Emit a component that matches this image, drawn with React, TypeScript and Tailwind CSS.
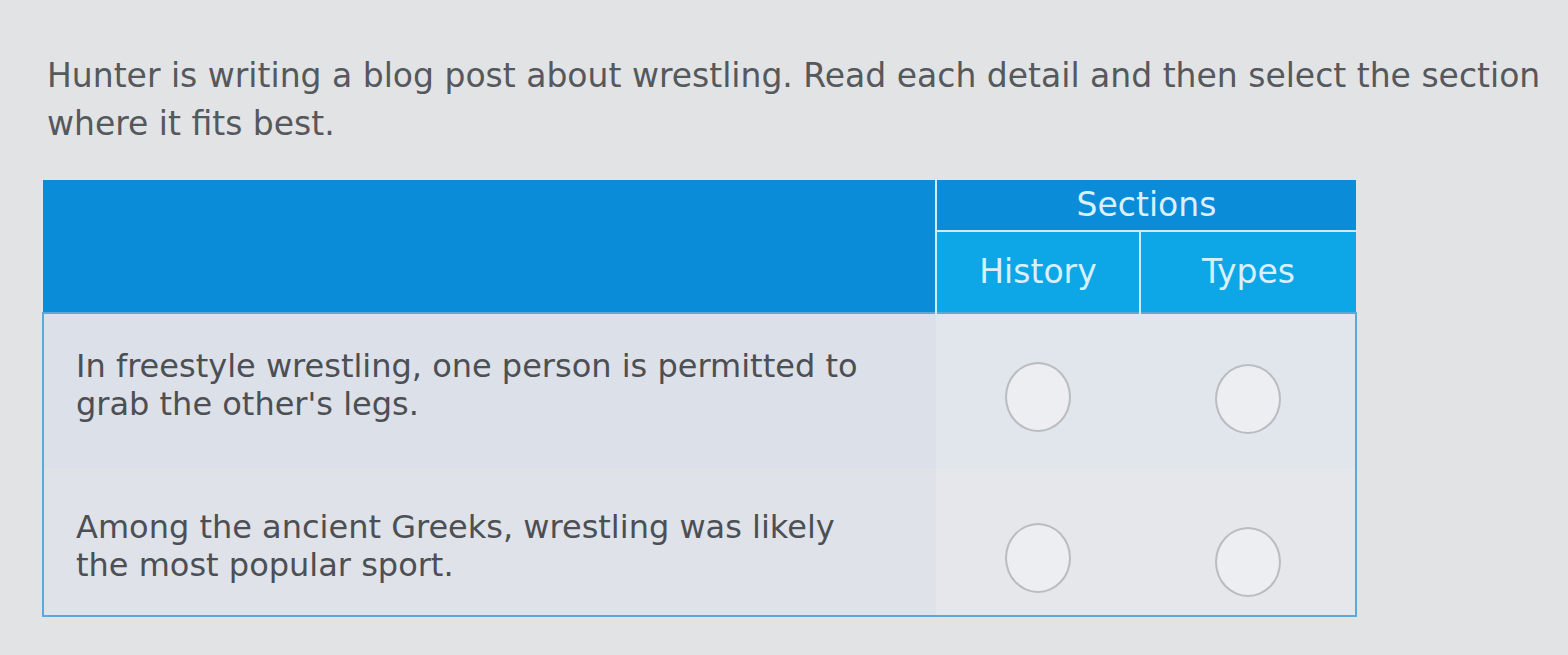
import React from 'react';

interface Detail {
  id: number;
  text: string[];
}

const details: Detail[] = [
  { id: 1, text: ['In freestyle wrestling, one person is permitted to', "grab the other's legs."] },
  { id: 2, text: ['Among the ancient Greeks, wrestling was likely', 'the most popular sport.'] },
];

const Radio = () => (
  <span className="inline-block w-[66px] h-[70px] rounded-[50%] border-2 border-[#b9bcc0] bg-[#eceef1]" />
);

const App: React.FC = () => {
  return (
    <div
      className="w-[1568px] h-[655px] overflow-hidden bg-[#e2e3e5] text-[#55585c]"
      style={{ fontFamily: '"DejaVu Sans", Verdana, sans-serif' }}
    >
      {/* Prompt */}
      <p className="pl-[47px] pt-[52px] text-[33px] leading-[48px] whitespace-nowrap">
        Hunter is writing a blog post about wrestling. Read each detail and then select the section
        <br />
        where it fits best.
      </p>

      {/* Table */}
      <table className="ml-[42px] mt-[32px] w-[1313px] border-collapse table-fixed">
        <colgroup>
          <col className="w-[893px]" />
          <col className="w-[204px]" />
          <col className="w-[216px]" />
        </colgroup>
        <thead>
          <tr className="h-[49px]">
            <th rowSpan={2} className="bg-[#0b8cd9]" />
            <th
              colSpan={2}
              className="bg-[#0b8cd9] border-l-2 border-b-2 border-[#cfeaf8] text-[#d9f0fc] text-[33px] font-normal"
            >
              Sections
            </th>
          </tr>
          <tr className="h-[82px]">
            <th className="bg-[#0da7e7] border-l-2 border-[#cfeaf8] text-[#d9f0fc] text-[33px] font-normal">
              History
            </th>
            <th className="bg-[#0da7e7] border-l-2 border-[#cfeaf8] text-[#d9f0fc] text-[33px] font-normal">
              Types
            </th>
          </tr>
        </thead>
        <tbody className="border-2 border-[#5ba9d9]">
          {details.map((d, i) => (
            <tr key={d.id} className={i === 0 ? 'h-[155px]' : 'h-[148px]'}>
              <td className={`${i === 0 ? 'bg-[#dce0e8] pb-[12px]' : 'bg-[#dfe2e8] pt-[10px]'} pl-[32px] text-[32px] leading-[38px] text-[#4c4f53] whitespace-nowrap`}>
                {d.text.map((line) => (
                  <div key={line}>{line}</div>
                ))}
              </td>
              <td className={`${i === 0 ? 'bg-[#e1e5ec]' : 'bg-[#e5e7eb]'} text-center align-middle`}>
                <div className={`flex justify-center ${i === 0 ? 'pt-[12px]' : 'pt-[34px]'}`}>
                  <Radio />
                </div>
              </td>
              <td className={`${i === 0 ? 'bg-[#e1e5ec]' : 'bg-[#e5e7eb]'} text-center align-middle`}>
                <div className={`flex justify-center ${i === 0 ? 'pt-[16px]' : 'pt-[42px]'}`}>
                  <Radio />
                </div>
              </td>
            </tr>
          ))}
        </tbody>
      </table>
    </div>
  );
};

export default App;
